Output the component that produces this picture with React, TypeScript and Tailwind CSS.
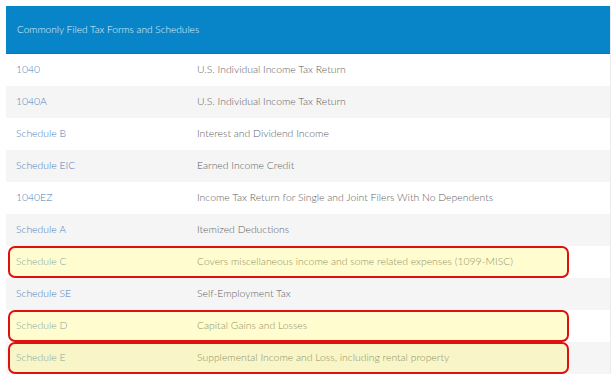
const rows: { form: string; desc: string; marked?: boolean }[] = [
  { form: "1040", desc: "U.S. Individual Income Tax Return" },
  { form: "1040A", desc: "U.S. Individual Income Tax Return" },
  { form: "Schedule B", desc: "Interest and Dividend Income" },
  { form: "Schedule EIC", desc: "Earned Income Credit" },
  { form: "1040EZ", desc: "Income Tax Return for Single and Joint Filers With No Dependents" },
  { form: "Schedule A", desc: "Itemized Deductions" },
  { form: "Schedule C", desc: "Covers miscellaneous income and some related expenses (1099-MISC)", marked: true },
  { form: "Schedule SE", desc: "Self-Employment Tax" },
  { form: "Schedule D", desc: "Capital Gains and Losses", marked: true },
  { form: "Schedule E", desc: "Supplemental Income and Loss, including rental property", marked: true },
];

export default function App() {
  return (
    <div className="h-[380px] w-[616px] bg-white pl-[6px] pr-[5px] pt-[6px] font-['Lato','Noto_Sans',sans-serif] text-[10.4px] font-light">
      <div className="border-r border-[#ececec]">
        <div className="flex h-[48px] items-center border-b border-[#0b76b0] bg-[#0785c8] pl-[11px] text-[10.1px] text-[#e3f1fa]">
          Commonly Filed Tax Forms and Schedules
        </div>
        {rows.map((row, i) => (
          <div
            key={row.form}
            className={`relative flex h-[32px] items-center ${i % 2 === 0 ? "bg-white" : "bg-[#f5f5f5]"}`}
          >
            <span className="w-[191px] pl-[10px] text-[#4a80ba]">{row.form}</span>
            <span className="text-[#5e5e5e]">{row.desc}</span>
            {row.marked && (
              <div className="absolute inset-y-0 left-[2px] w-[561px] rounded-[7px] border-2 border-[#e01010] bg-[#fff862]/30" />
            )}
          </div>
        ))}
      </div>
    </div>
  );
}
